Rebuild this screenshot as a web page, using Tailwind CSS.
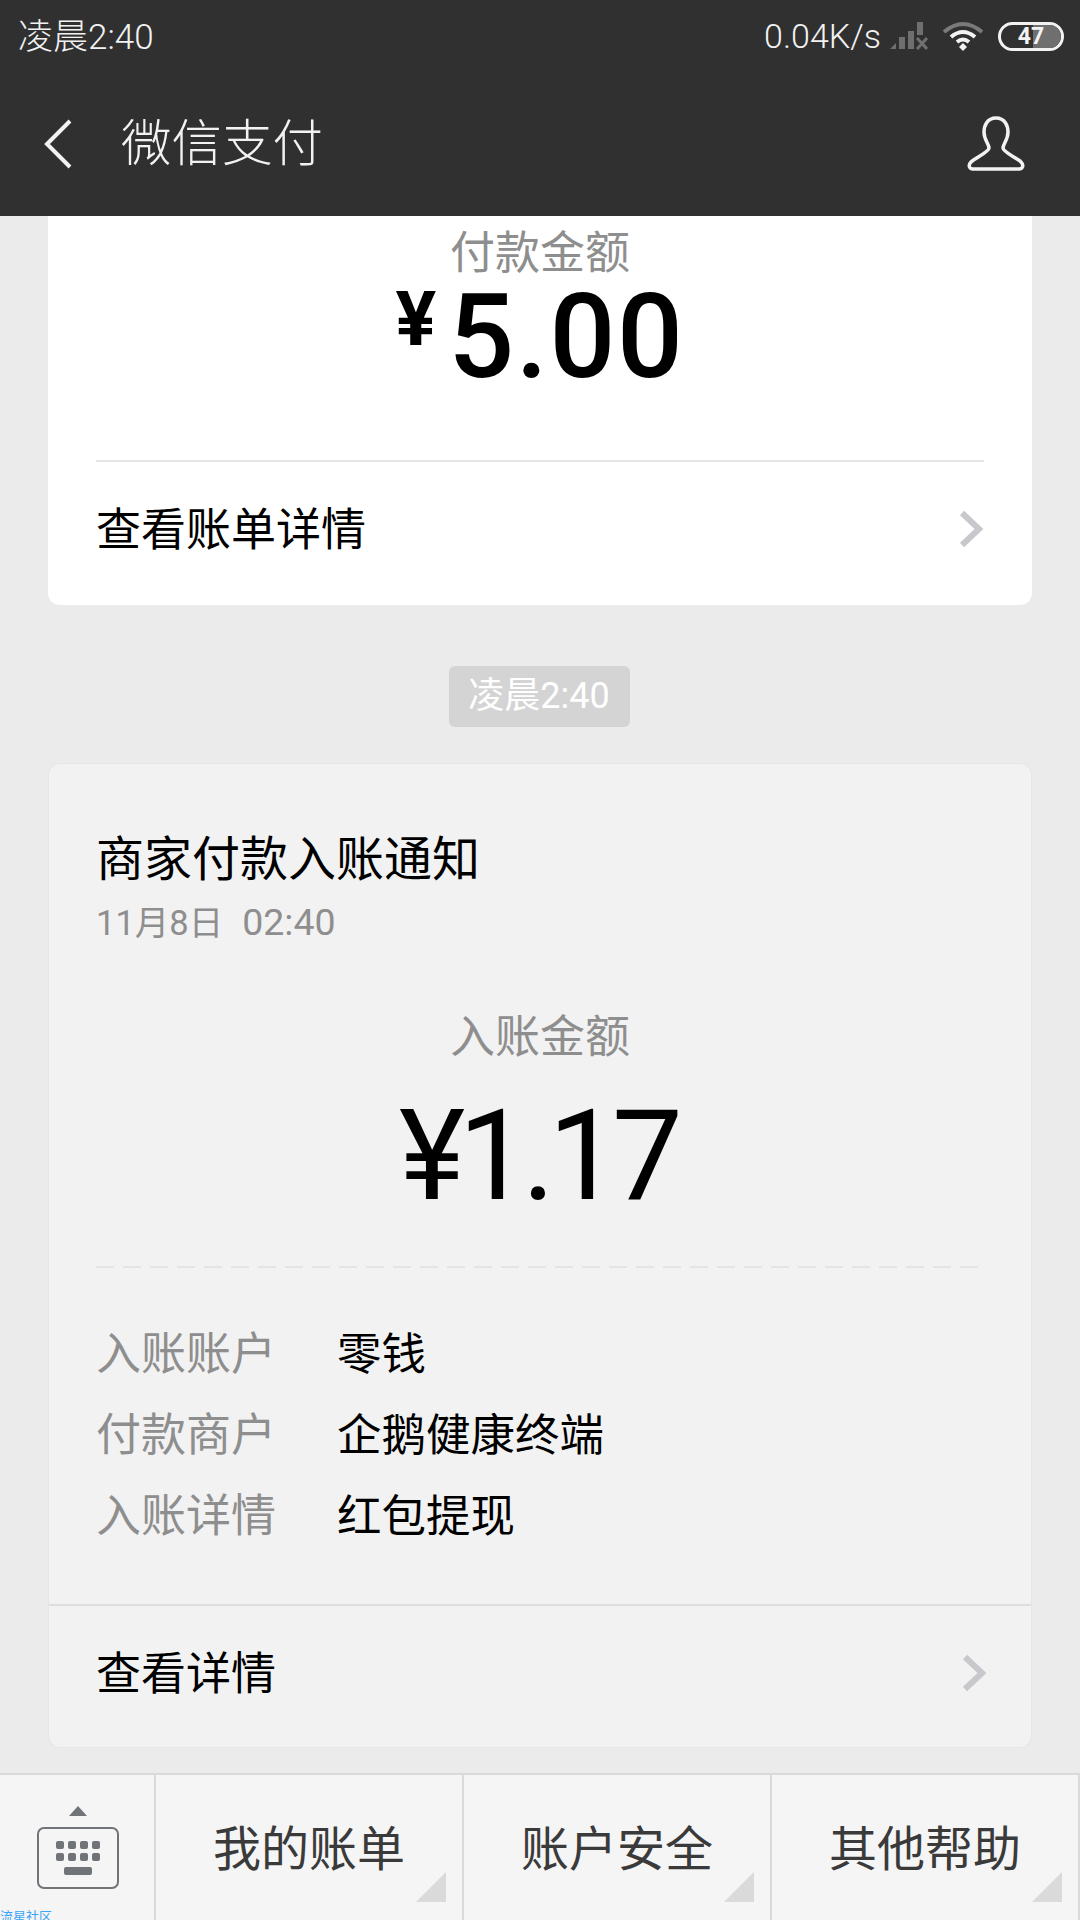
<!DOCTYPE html>
<html lang="zh-CN">
<head>
    <meta charset="UTF-8">
    <meta name="viewport" content="width=device-width, initial-scale=1.0">
    <title>微信支付</title>
    <script src="https://cdn.jsdelivr.net/npm/@tailwindcss/browser@4"></script>
</head>
<body class="font-['Roboto','Noto_Sans_CJK_SC',sans-serif]">
    <div class="w-[1080px] h-[1920px] flex flex-col overflow-hidden bg-[#ebebeb]">
        <!-- Status bar + title bar -->
        <header class="h-[216px] shrink-0 bg-[#303030] text-[#f2f2f2]">
            <div class="h-[72px] flex items-center justify-between pl-[18px] pr-[16px]">
                <span class="text-[35px] leading-none font-light mt-[2px]">凌晨2:40</span>
                <div class="flex items-center">
                    <span class="text-[34px] leading-none font-light">0.04K/s</span>
                    <svg class="ml-[9px]" width="38" height="28" viewBox="0 0 38 28" fill="#6f6f6f">
                        <path d="M0 27 L6 21 V27Z"/><rect x="9" y="15" width="6" height="12"/><rect x="18" y="9" width="6" height="18"/><rect x="27" y="0" width="6" height="13"/>
                        <path d="M27 16 L37 27 M37 16 L27 27" stroke="#6f6f6f" stroke-width="3"/>
                    </svg>
                    <svg class="ml-[14px]" width="42" height="30" viewBox="0 0 42 30" fill="none">
                        <path d="M2 11 Q21 -5 40 11" stroke="#7a7a7a" stroke-width="4"/>
                        <path d="M9 16 Q21 6 33 16" stroke="#f2f2f2" stroke-width="4"/>
                        <path d="M15 21 Q21 16 27 21" stroke="#f2f2f2" stroke-width="4"/>
                        <path d="M17 26 L21 22 L25 26 L21 30Z" fill="#f2f2f2"/>
                    </svg>
                    <div class="relative ml-[14px] w-[66px] h-[29px] rounded-full border-[3px] border-[#f2f2f2] flex items-center justify-center overflow-hidden">
                        <div class="absolute right-0 top-0 bottom-0 w-[28px] bg-[#6f6f6f] rounded-r-full"></div>
                        <span class="relative text-[23px] leading-none font-bold text-[#f2f2f2]">47</span>
                    </div>
                </div>
            </div>
            <div class="h-[144px] flex items-center justify-between pl-[43px] pr-[55px]">
                <div class="flex items-center">
                    <svg width="30" height="50" viewBox="0 0 30 50" fill="none"><path d="M27 2 L4 25 L27 48" stroke="#f2f2f2" stroke-width="4"/></svg>
                    <span class="ml-[48px] text-[50.5px] leading-none font-light">微信支付</span>
                </div>
                <svg width="58" height="56" viewBox="0 0 58 56" fill="none"><path d="M29 2 C38 2 41 10 41 16 C41 24 36 28 36 32 C36 36 50 42 54 46 C57 49 56 53 52 53 L6 53 C2 53 1 49 4 46 C8 42 22 36 22 32 C22 28 17 24 17 16 C17 10 20 2 29 2Z" stroke="#f2f2f2" stroke-width="3.5"/></svg>
            </div>
        </header>

        <main class="flex-1 min-h-0 px-[48px]">
            <!-- Previous message, cut off by the title bar -->
            <section class="h-[389px] bg-white rounded-b-[12px] px-[48px]">
                <div class="h-[246px] border-b-2 border-[#e5e5e5] flex flex-col items-center">
                    <p class="mt-[13px] text-[45px] leading-[50px] text-[#8e8e8e]">付款金额</p>
                    <div class="flex items-start font-medium text-black leading-none">
                        <span class="mt-[2px] mr-[12px] text-[76px] leading-none font-bold">¥</span>
                        <span class="text-[116px] leading-none tracking-[1.5px]">5.00</span>
                    </div>
                </div>
                <div class="h-[141px] flex items-center justify-between pb-[4px]">
                    <span class="text-[45px] text-black">查看账单详情</span>
                    <svg class="mr-[-1px] mb-[3px]" width="26" height="38" viewBox="0 0 26 38" fill="none"><path d="M3 3 L20 19 L3 35" stroke="#c8c8cc" stroke-width="6"/></svg>
                </div>
            </section>

            <div class="h-[158px] flex items-center justify-center pt-[24px] pr-[2px]">
                <span class="w-[181px] h-[61px] flex items-center justify-center rounded-[6px] bg-[#d4d4d4] text-white text-[36px] leading-none">凌晨2:40</span>
            </div>

            <!-- Merchant notice card -->
            <section class="h-[985px] bg-[#f2f2f2] border border-[#e6e6e6] rounded-[12px]">
                <div class="px-[47px]">
                    <h2 class="pt-[66px] text-[48px] leading-[60px] text-black font-normal">商家付款入账通知</h2>
                    <p class="mt-[2px] leading-[60px] text-[#8e8e8e] flex items-baseline">
                        <span class="text-[34.5px]">11月8日</span>
                        <span class="ml-[19px] text-[37.5px]">02:40</span>
                    </p>
                    <p class="mt-[57px] text-center text-[45px] leading-[56px] text-[#8e8e8e]">入账金额</p>
                    <p class="mt-[20px] pr-[5px] text-center text-[126px] leading-[140px] text-black tracking-[-7px]">¥1.17</p>
                    <div class="mt-[40px] h-[2px] bg-[repeating-linear-gradient(90deg,#e4e4e4_0,#e4e4e4_18px,transparent_18px,transparent_27px)]"></div>
                    <dl class="mt-[57px] flex flex-col gap-[21px] text-[45px] leading-[60px]">
                        <div class="flex"><dt class="w-[241px] text-[#8e8e8e]">入账账户</dt><dd class="text-black text-[44.5px]">零钱</dd></div>
                        <div class="flex"><dt class="w-[241px] text-[#8e8e8e]">付款商户</dt><dd class="text-black text-[44.5px]">企鹅健康终端</dd></div>
                        <div class="flex"><dt class="w-[241px] text-[#8e8e8e]">入账详情</dt><dd class="text-black text-[44.5px]">红包提现</dd></div>
                    </dl>
                </div>
                <div class="mt-[57px] h-[140px] border-t-2 border-[#dedede] flex items-center justify-between pl-[47px] pr-[43px]">
                    <span class="text-[45px] text-black">查看详情</span>
                    <svg class="mb-[4px]" width="26" height="38" viewBox="0 0 26 38" fill="none"><path d="M3 3 L20 19 L3 35" stroke="#c8c8cc" stroke-width="6"/></svg>
                </div>
            </section>
        </main>

        <!-- Bottom menu -->
        <nav class="h-[147px] shrink-0 flex bg-[#f5f5f5] border-t-2 border-[#d9d9d9] text-[#3a3a3a]">
            <div class="relative w-[156px] shrink-0 border-r-2 border-[#d9d9d9] flex flex-col items-center">
                <svg class="mt-[31px] ml-[2px]" width="18" height="10" viewBox="0 0 18 10" fill="#707377"><path d="M9 0 L18 10 H0Z"/></svg>
                <svg class="mt-[11px] ml-[2px]" width="82" height="62" viewBox="0 0 82 62" fill="none">
                    <rect x="1" y="1" width="80" height="60" rx="6" stroke="#707377" stroke-width="2"/>
                    <g fill="#707377">
                        <rect x="19" y="14" width="8" height="8" rx="2"/><rect x="31" y="14" width="8" height="8" rx="2"/><rect x="43" y="14" width="8" height="8" rx="2"/><rect x="55" y="14" width="8" height="8" rx="2"/>
                        <rect x="19" y="26" width="8" height="8" rx="2"/><rect x="31" y="26" width="8" height="8" rx="2"/><rect x="43" y="26" width="8" height="8" rx="2"/><rect x="55" y="26" width="8" height="8" rx="2"/>
                        <rect x="27" y="40" width="28" height="8" rx="2"/>
                    </g>
                </svg>
                <span class="absolute left-0 bottom-[-3px] text-[13px] leading-none text-[#3ba5f5]">流星社区</span>
            </div>
            <div class="relative w-[308px] shrink-0 border-r-2 border-[#d9d9d9] flex items-center justify-center pt-[4px] text-[48px]">我的账单<svg class="absolute right-[16px] top-[97px]" width="30" height="30" viewBox="0 0 30 30" fill="#dadada"><path d="M30 0 V30 H0Z"/></svg></div>
            <div class="relative w-[308px] shrink-0 border-r-2 border-[#d9d9d9] flex items-center justify-center pt-[4px] text-[48px]">账户安全<svg class="absolute right-[16px] top-[97px]" width="30" height="30" viewBox="0 0 30 30" fill="#dadada"><path d="M30 0 V30 H0Z"/></svg></div>
            <div class="relative w-[308px] shrink-0 border-r-2 border-[#d9d9d9] flex items-center justify-center pt-[4px] text-[48px]">其他帮助<svg class="absolute right-[16px] top-[97px]" width="30" height="30" viewBox="0 0 30 30" fill="#dadada"><path d="M30 0 V30 H0Z"/></svg></div>
        </nav>
    </div>
</body>
</html>
